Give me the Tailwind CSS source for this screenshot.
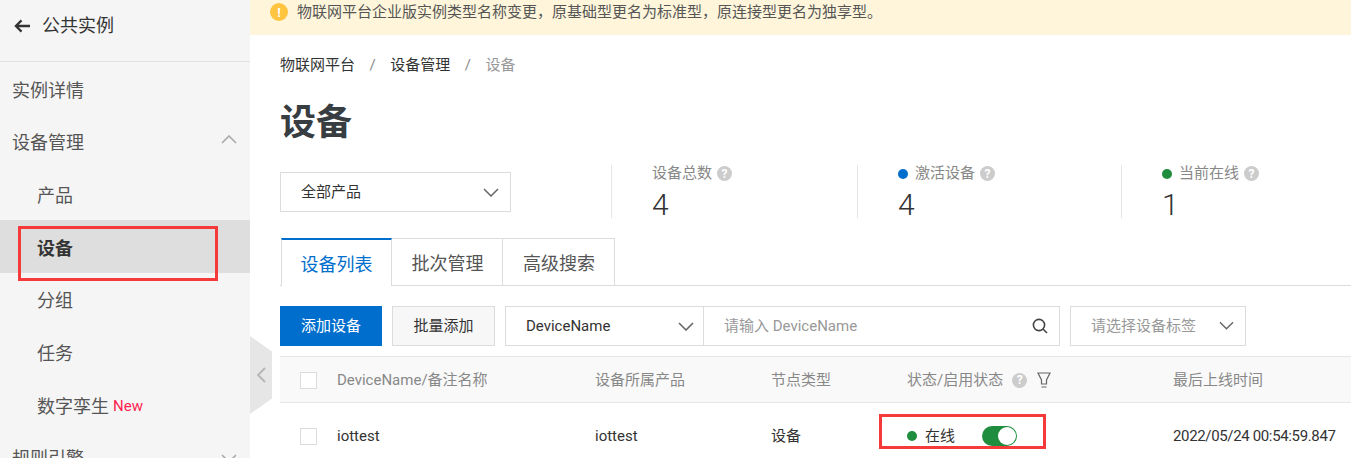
<!DOCTYPE html>
<html lang="zh-CN">
<head>
  <meta charset="UTF-8">
  <title>设备</title>
  <script src="https://cdn.jsdelivr.net/npm/@tailwindcss/browser@4"></script>
</head>
<body class="relative h-[458px] w-[1351px] overflow-hidden bg-white font-['Roboto','Noto_Sans_CJK_SC',sans-serif] text-[15px] text-[#333]">
  <div class="flex h-[458px] overflow-hidden">
    <!-- Sidebar -->
    <aside class="h-[458px] w-[250px] shrink-0 overflow-hidden bg-[#f5f5f5] text-[18px] text-[#555]">
      <div class="flex h-[62px] items-center gap-[12px] border-b border-[#e0e0e0] pb-[10px] pl-[14px] text-[#333]">
        <svg class="h-[16px] w-[16px]" viewBox="0 0 17 16" fill="none" stroke="#333" stroke-width="2.4"><path d="M17 8H2M8 2 2 8l6 6"/></svg>
        <span>公共实例</span>
      </div>
      <div class="flex h-[52px] items-center pl-[12px] pt-[4px]">实例详情</div>
      <div class="flex h-[52px] items-center justify-between pl-[12px] pr-[13px] pt-[5px]">
        <span>设备管理</span>
        <svg class="mt-[-6px] h-[9px] w-[16px]" viewBox="0 0 16 9" fill="none" stroke="#aaa" stroke-width="1.6"><path d="M1 8l7-7 7 7"/></svg>
      </div>
      <div class="flex h-[54px] items-center pl-[37px] pt-[5px]">产品</div>
      <div class="flex h-[53px] items-center bg-[#dedede] pl-[37px] pt-[3px] font-bold text-[#333]">设备</div>
      <div class="flex h-[52px] items-center pl-[37px] pt-[2px]">分组</div>
      <div class="flex h-[52px] items-center pl-[37px] pt-[4px]">任务</div>
      <div class="flex h-[52px] items-center gap-[4px] pl-[37px] pt-[6px]">
        <span>数字孪生</span><span class="text-[15px] text-[#ff1f4f]">New</span>
      </div>
      <div class="flex h-[52px] items-center justify-between pl-[12px] pr-[13px] pt-[6px]">
        <span>规则引擎</span>
        <svg class="h-[9px] w-[16px]" viewBox="0 0 16 9" fill="none" stroke="#aaa" stroke-width="1.6"><path d="M1 1l7 7 7-7"/></svg>
      </div>
    </aside>

    <!-- Main -->
    <main class="h-[458px] min-w-0 flex-1 overflow-hidden">
      <div class="flex h-[35px] items-center gap-[9px] bg-[#fef5db] pb-[11px] pl-[20px] text-[#555]">
        <span class="flex h-[18px] w-[18px] items-center justify-center rounded-full bg-[#ffc440] text-[13px] font-bold leading-none text-white">!</span>
        <span>物联网平台企业版实例类型名称变更，原基础型更名为标准型，原连接型更名为独享型。</span>
      </div>

      <div class="pl-[30px]">
        <nav class="flex h-[60px] items-center">
          <span>物联网平台</span><span class="mx-[14.5px] text-[#888]">/</span><span>设备管理</span><span class="mx-[14.5px] text-[#888]">/</span><span class="text-[#999]">设备</span>
        </nav>
        <h1 class="h-[70px] pt-[7px] text-[36px] font-bold leading-[42px] text-[#373d41]">设备</h1>

        <!-- Stats -->
        <div class="flex h-[53px]">
          <div class="mt-[7px] flex h-[40px] w-[231px] items-center justify-between border border-[#dcdcdc] pl-[20px] pr-[11px]">
            <span>全部产品</span>
            <svg class="h-[9px] w-[16px]" viewBox="0 0 16 9" fill="none" stroke="#666" stroke-width="1.5"><path d="M1 1l7 7 7-7"/></svg>
          </div>
          <div class="ml-[100px] w-[246px] border-l border-[#e6e6e6] pl-[40px]">
            <div class="flex h-[17px] items-center gap-[5px] text-[#888]">设备总数
              <span class="flex h-[15px] w-[15px] items-center justify-center rounded-full bg-[#ccc] text-[12px] font-bold leading-none text-white">?</span>
            </div>
            <div class="mt-[5px] text-[30px] font-light leading-[36px] text-[#333]">4</div>
          </div>
          <div class="w-[264px] border-l border-[#e6e6e6] pl-[40px]">
            <div class="flex h-[17px] items-center text-[#888]">
              <span class="mr-[7px] h-[10px] w-[10px] rounded-full bg-[#006ecc]"></span>激活设备
              <span class="ml-[5px] flex h-[15px] w-[15px] items-center justify-center rounded-full bg-[#ccc] text-[12px] font-bold leading-none text-white">?</span>
            </div>
            <div class="mt-[5px] text-[30px] font-light leading-[36px] text-[#333]">4</div>
          </div>
          <div class="flex-1 border-l border-[#e6e6e6] pl-[40px]">
            <div class="flex h-[17px] items-center text-[#888]">
              <span class="mr-[7px] h-[10px] w-[10px] rounded-full bg-[#1e8e3e]"></span>当前在线
              <span class="ml-[5px] flex h-[15px] w-[15px] items-center justify-center rounded-full bg-[#ccc] text-[12px] font-bold leading-none text-white">?</span>
            </div>
            <div class="mt-[5px] text-[30px] font-light leading-[36px] text-[#333]">1</div>
          </div>
        </div>

        <!-- Tabs -->
        <div class="mt-[20px] flex h-[48px] border-b border-[#dcdcdc] text-[18px] text-[#555]">
          <div class="ml-[1px] flex h-[48px] w-[111px] items-center justify-center border-x border-t-2 border-x-[#dcdcdc] border-t-[#006ecc] bg-white pt-[3px] text-[#006ecc]">设备列表</div>
          <div class="flex h-[47px] w-[111px] items-center justify-center border-r border-t border-[#dcdcdc] pl-[1px] pt-[3px]">批次管理</div>
          <div class="flex h-[47px] w-[112px] items-center justify-center border-r border-t border-[#dcdcdc] pl-[1px] pt-[3px]">高级搜索</div>
        </div>

        <!-- Toolbar -->
        <div class="mt-[20px] flex h-[40px]">
          <button class="w-[102px] bg-[#006ecc] text-white">添加设备</button>
          <button class="ml-[10px] w-[103px] border border-[#dcdcdc] bg-[#f7f7f7] text-[#333]">批量添加</button>
          <div class="ml-[10px] flex w-[199px] items-center justify-between border border-[#dcdcdc] pl-[20px] pr-[9px] text-[#333]">
            <span>DeviceName</span>
            <svg class="h-[9px] w-[16px]" viewBox="0 0 16 9" fill="none" stroke="#666" stroke-width="1.6"><path d="M1 1l7 7 7-7"/></svg>
          </div>
          <div class="flex w-[356px] items-center justify-between border-y border-r border-[#dcdcdc] pl-[20px] pr-[11px] text-[#999]">
            <span>请输入 DeviceName</span>
            <svg class="h-[16px] w-[16px]" viewBox="0 0 16 16" fill="none" stroke="#444" stroke-width="1.6"><circle cx="7" cy="7" r="5.6"/><path d="M11 11l4 4"/></svg>
          </div>
          <div class="ml-[10px] flex w-[176px] items-center justify-between border border-[#dcdcdc] pl-[20px] pr-[11px] text-[#999]">
            <span>请选择设备标签</span>
            <svg class="mt-[-2px] h-[9px] w-[15px]" viewBox="0 0 16 9" fill="none" stroke="#666" stroke-width="1.5"><path d="M1 1l7 7 7-7"/></svg>
          </div>
        </div>

        <!-- Table -->
        <div class="mt-[10px] flex h-[47px] items-center border-y border-[#e6e6e6] bg-[#f9f9f9] pt-[1px] text-[#888]">
          <span class="ml-[20px] h-[17px] w-[17px] border border-[#dcdcdc] bg-white"></span>
          <span class="ml-[20px] w-[258px]">DeviceName/备注名称</span>
          <span class="w-[176px]">设备所属产品</span>
          <span class="w-[136px]">节点类型</span>
          <span class="flex w-[266px] items-center">状态/启用状态
            <span class="ml-[9px] flex h-[15px] w-[15px] items-center justify-center rounded-full bg-[#ccc] text-[12px] font-bold leading-none text-white">?</span>
            <svg class="ml-[10px] h-[16px] w-[14px]" viewBox="0 0 14 16" fill="none" stroke="#666" stroke-width="1.2"><path d="M1 1h12L9.500 8v4h-5V8zM4.500 15h5"/></svg>
          </span>
          <span>最后上线时间</span>
        </div>
        <div class="flex h-[55px] items-center pt-[11px] text-[#333]">
          <span class="ml-[20px] h-[17px] w-[17px] border border-[#dcdcdc] bg-white"></span>
          <span class="ml-[20px] w-[258px]">iottest</span>
          <span class="w-[176px]">iottest</span>
          <span class="w-[136px]">设备</span>
          <span class="flex w-[266px] items-center">
            <span class="mr-[8px] h-[10px] w-[10px] rounded-full bg-[#1e8e3e]"></span>在线
            <span class="ml-[27px] flex h-[20px] w-[35px] items-center justify-end rounded-full bg-[#1e8e3e] pr-[1px]"><span class="h-[18px] w-[18px] rounded-full bg-white"></span></span>
          </span>
          <span class="tracking-[-0.35px]">2022/05/24 00:54:59.847</span>
        </div>
      </div>
    </main>
  </div>

  <!-- Sidebar collapse handle -->
  <div class="absolute left-[250px] top-[336px] flex h-[78px] w-[22px] items-center justify-center bg-[#e6e6e6] [clip-path:polygon(0_0,100%_20%,100%_80%,0_100%)]">
    <svg class="h-[16px] w-[9px]" viewBox="0 0 9 16" fill="none" stroke="#b5b5b5" stroke-width="1.8"><path d="M8 1 1 8l7 7"/></svg>
  </div>

  <!-- Red annotation boxes -->
  <div class="absolute left-[18px] top-[226px] h-[55px] w-[200px] border-[3px] border-[#f63a3a]"></div>
  <div class="absolute left-[879px] top-[414px] h-[35px] w-[167px] border-[3px] border-[#f63a3a]"></div>
</body>
</html>
